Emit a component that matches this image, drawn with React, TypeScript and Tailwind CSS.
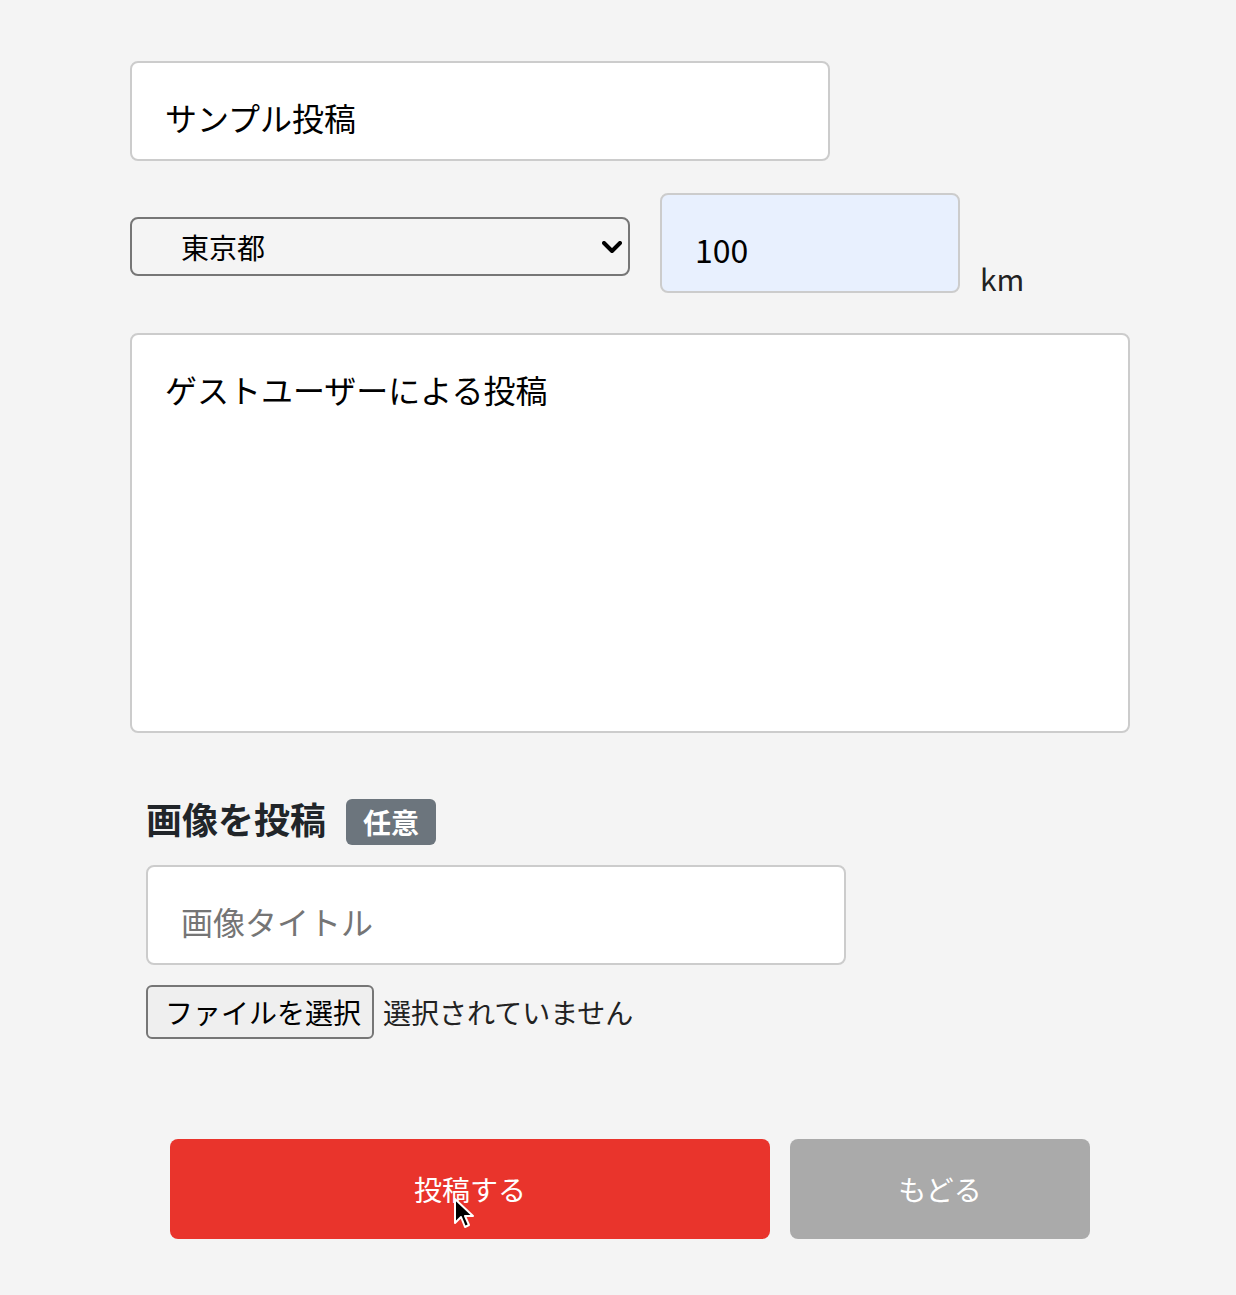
import React from "react";

const font = { fontFamily: '"Noto Sans CJK JP", "Noto Sans", sans-serif' };

export default function App() {
  return (
    <div className="min-h-[1295px] w-full bg-[#f4f4f4] text-black" style={font}>
      <div className="relative pl-[130px] pt-[61px]">
        <input
          className="box-border block h-[100px] w-[700px] rounded-[8px] border-2 border-[#cccccc] bg-white pl-[33px] pt-[12px] text-[32px] text-black outline-none"
          defaultValue="サンプル投稿"
        />

        <div className="mt-[32px] flex items-start">
          <div className="relative mt-[24px] h-[59px] w-[500px]">
            <select
              className="box-border block h-[59px] w-[500px] appearance-none rounded-[8px] border-2 border-[#767676] bg-[#f4f4f4] pl-[49px] text-[28px] text-black outline-none"
              defaultValue="東京都"
            >
              <option>東京都</option>
            </select>
            <svg
              className="pointer-events-none absolute left-[472px] top-[24px]"
              width="20"
              height="13"
              viewBox="0 0 20 13"
            >
              <path d="M2 2 L10 10 L18 2" fill="none" stroke="#000" strokeWidth="4" strokeLinecap="round" strokeLinejoin="round" />
            </svg>
          </div>
          <input
            className="ml-[30px] box-border block h-[100px] w-[300px] rounded-[8px] border-2 border-[#cccccc] bg-[#e8f0fe] pl-[33px] pt-[12px] text-[32px] text-black outline-none"
            defaultValue="100"
          />
          <span className="ml-[20px] self-end text-[30px] leading-none text-[#222]">km</span>
        </div>

        <textarea
          className="mt-[40px] box-border block h-[400px] w-[1000px] resize-none rounded-[8px] border-2 border-[#cccccc] bg-white pl-[33px] pt-[30px] text-[32px] leading-[48px] text-black outline-none"
          defaultValue="ゲストユーザーによる投稿"
        />

        <div className="pl-[16px]">
          <div className="mt-[66px] flex h-[46px] items-start">
            <h2 className="text-[36px] font-bold leading-[38px] text-[#212529]">画像を投稿</h2>
            <span className="ml-[20px] flex h-[46px] w-[90px] items-center justify-center rounded-[6px] bg-[#6c757d] text-[28px] font-bold leading-none text-white">
              任意
            </span>
          </div>

          <input
            className="mt-[20px] box-border block h-[100px] w-[700px] rounded-[8px] border-2 border-[#cccccc] bg-white pl-[33px] pt-[12px] text-[32px] text-black outline-none placeholder:text-[#757575]"
            placeholder="画像タイトル"
          />

          <div className="mt-[20px] flex items-center">
            <div className="box-border flex h-[54px] w-[228px] items-center rounded-[6px] border-2 border-[#767676] bg-[#efefef] pl-[17px] text-[28px] leading-none text-black">
              ファイルを選択
            </div>
            <span className="ml-[9px] text-[28px] leading-none text-[#222]">選択されていません</span>
          </div>
        </div>

        <div className="mt-[100px] flex pl-[40px]">
          <button className="relative flex h-[100px] w-[600px] items-center justify-center rounded-[8px] bg-[#e9342c] text-[28px] text-white">
            投稿する
            <svg className="absolute left-[283px] top-[58px]" width="24" height="34" viewBox="0 0 24 34">
              <path d="M2 2 L2 26 L8 20 L12 30 L16 28 L12 19 L20 19 Z" fill="#000" stroke="#fff" strokeWidth="2" strokeLinejoin="round" />
            </svg>
          </button>
          <button className="ml-[20px] flex h-[100px] w-[300px] items-center justify-center rounded-[8px] bg-[#aaaaaa] text-[28px] text-white">
            もどる
          </button>
        </div>
      </div>
    </div>
  );
}
